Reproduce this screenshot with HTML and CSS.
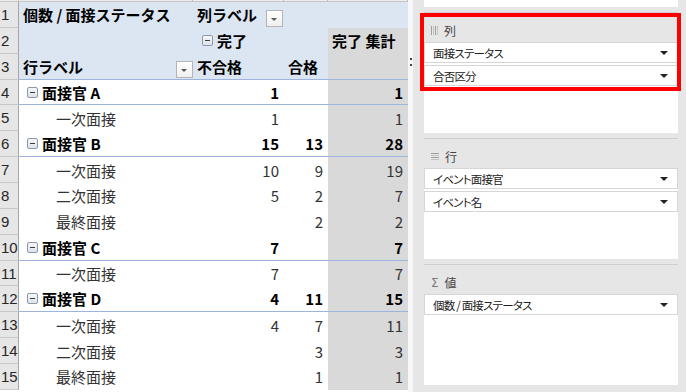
FILE: index.html
```html
<!DOCTYPE html>
<html lang="ja">
<head>
    <meta charset="UTF-8">
    <title>ピボットテーブル</title>
    <link rel="stylesheet" href="styles.css">
</head>
<body>
<div class="screen">
    <div class="sheet">
        <div class="row colhead"><div></div><div></div><div></div><div></div><div></div></div>

        <div class="row hd">
            <div class="cell rn">1</div>
            <div class="cell b">個数 / 面接ステータス</div>
            <div class="cell b has-btn">列ラベル<span class="filter"></span></div>
            <div class="cell"></div>
            <div class="cell"></div>
        </div>
        <div class="row hd">
            <div class="cell rn">2</div>
            <div class="cell"></div>
            <div class="cell b toggle-col"><span class="minus"></span>完了</div>
            <div class="cell"></div>
            <div class="cell b tot">完了 集計</div>
        </div>
        <div class="row hd line">
            <div class="cell rn">3</div>
            <div class="cell b has-btn edge">行ラベル<span class="filter"></span></div>
            <div class="cell b">不合格</div>
            <div class="cell b">合格</div>
            <div class="cell tot"></div>
        </div>

        <div class="row line">
            <div class="cell rn">4</div>
            <div class="cell b group"><span class="minus"></span>面接官 A</div>
            <div class="cell b num">1</div>
            <div class="cell num"></div>
            <div class="cell b num tot">1</div>
        </div>
        <div class="row">
            <div class="cell rn">5</div>
            <div class="cell sub">一次面接</div>
            <div class="cell num">1</div>
            <div class="cell num"></div>
            <div class="cell num tot">1</div>
        </div>
        <div class="row line">
            <div class="cell rn">6</div>
            <div class="cell b group"><span class="minus"></span>面接官 B</div>
            <div class="cell b num">15</div>
            <div class="cell b num">13</div>
            <div class="cell b num tot">28</div>
        </div>
        <div class="row">
            <div class="cell rn">7</div>
            <div class="cell sub">一次面接</div>
            <div class="cell num">10</div>
            <div class="cell num">9</div>
            <div class="cell num tot">19</div>
        </div>
        <div class="row">
            <div class="cell rn">8</div>
            <div class="cell sub">二次面接</div>
            <div class="cell num">5</div>
            <div class="cell num">2</div>
            <div class="cell num tot">7</div>
        </div>
        <div class="row">
            <div class="cell rn">9</div>
            <div class="cell sub">最終面接</div>
            <div class="cell num"></div>
            <div class="cell num">2</div>
            <div class="cell num tot">2</div>
        </div>
        <div class="row line">
            <div class="cell rn">10</div>
            <div class="cell b group"><span class="minus"></span>面接官 C</div>
            <div class="cell b num">7</div>
            <div class="cell num"></div>
            <div class="cell b num tot">7</div>
        </div>
        <div class="row">
            <div class="cell rn">11</div>
            <div class="cell sub">一次面接</div>
            <div class="cell num">7</div>
            <div class="cell num"></div>
            <div class="cell num tot">7</div>
        </div>
        <div class="row line">
            <div class="cell rn">12</div>
            <div class="cell b group"><span class="minus"></span>面接官 D</div>
            <div class="cell b num">4</div>
            <div class="cell b num">11</div>
            <div class="cell b num tot">15</div>
        </div>
        <div class="row">
            <div class="cell rn">13</div>
            <div class="cell sub">一次面接</div>
            <div class="cell num">4</div>
            <div class="cell num">7</div>
            <div class="cell num tot">11</div>
        </div>
        <div class="row">
            <div class="cell rn">14</div>
            <div class="cell sub">二次面接</div>
            <div class="cell num"></div>
            <div class="cell num">3</div>
            <div class="cell num tot">3</div>
        </div>
        <div class="row">
            <div class="cell rn">15</div>
            <div class="cell sub">最終面接</div>
            <div class="cell num"></div>
            <div class="cell num">1</div>
            <div class="cell num tot">1</div>
        </div>
    </div>

    <div class="split"><span class="grip"></span></div>

    <div class="panel">
        <div class="list top-list"></div>

        <div class="area">
            <div class="area-head">
                <svg class="ico" width="7" height="9" viewBox="0 0 7 9">
                    <rect x="0" y="0" width="1" height="9" fill="#a0a0a0"/>
                    <rect x="2" y="0" width="1" height="9" fill="#c4c4c4"/>
                    <rect x="4" y="0" width="1" height="9" fill="#a0a0a0"/>
                    <rect x="6" y="0" width="1" height="9" fill="#c4c4c4"/>
                </svg>
                <span>列</span>
            </div>
            <div class="list">
                <div class="item">面接ステータス<span class="arrow"></span></div>
                <div class="item">合否区分<span class="arrow"></span></div>
            </div>
        </div>

        <div class="area">
            <div class="area-head">
                <svg class="ico" width="8" height="7" viewBox="0 0 8 7">
                    <rect x="0" y="0" width="8" height="1" fill="#a0a0a0"/>
                    <rect x="0" y="2" width="8" height="1" fill="#c4c4c4"/>
                    <rect x="0" y="4" width="8" height="1" fill="#a0a0a0"/>
                    <rect x="0" y="6" width="8" height="1" fill="#c4c4c4"/>
                </svg>
                <span>行</span>
            </div>
            <div class="list">
                <div class="item">イベント面接官<span class="arrow"></span></div>
                <div class="item">イベント名<span class="arrow"></span></div>
            </div>
        </div>

        <div class="area">
            <div class="area-head">
                <span class="sigma">Σ</span>
                <span>値</span>
            </div>
            <div class="list">
                <div class="item">個数 / 面接ステータス<span class="arrow"></span></div>
            </div>
        </div>

        <div class="mark"></div>
    </div>
</div>
</body>
</html>
```

FILE: styles.css
```css
* {
    box-sizing: border-box;
}

body {
    margin: 0;
    background: #fff;
    font-family: "Noto Sans CJK JP", sans-serif;
}

.screen {
    display: flex;
    width: 686px;
    height: 392px;
    overflow: hidden;
}

/* spreadsheet */

.sheet {
    width: 408px;
    flex: none;
}

.row {
    display: grid;
    grid-template-columns: 19px 174px 91px 44px 80px;
    height: 25.86px;
}

.colhead {
    height: 2px;
}

.colhead div {
    background: #ececec;
    border-right: 1px solid #bdbdbd;
    border-bottom: 1px solid #c6c6c6;
}

.cell {
    display: flex;
    align-items: center;
    padding: 0 4px;
    font-size: 15px;
    color: #333;
    white-space: nowrap;
    overflow: hidden;
}

.hd .cell {
    background: #dce6f2;
}

.cell.tot {
    background: #d9d9d9;
}

.cell.rn {
    background: #e6e6e6;
    border-right: 1px solid #a6a6a6;
    border-bottom: 1px solid #c8c8c8;
    font-family: "Liberation Sans", sans-serif;
    font-size: 15px;
    color: #262626;
    padding: 0 0 0 1px;
}

.line .cell:not(.rn) {
    border-bottom: 1px solid #9db5dc;
}

.b {
    font-weight: bold;
    color: #000;
}

.num {
    justify-content: flex-end;
    padding-right: 5px;
}

.sub {
    padding-left: 37px;
}

.group {
    padding-left: 8px;
}

.toggle-col {
    padding-left: 9px;
}

.minus {
    width: 11px;
    height: 11px;
    margin-right: 4px;
    border: 1px solid #8d99aa;
    border-radius: 2px;
    background: linear-gradient(#f4f6f9, #dde3ec);
    position: relative;
    flex: none;
}

.minus::after {
    content: "";
    position: absolute;
    left: 2px;
    top: 4px;
    width: 5px;
    height: 1px;
    background: #3c3c3c;
}

.has-btn {
    justify-content: space-between;
    padding-right: 1px;
}

.has-btn.edge {
    padding-right: 0;
}

.filter {
    align-self: flex-end;
    width: 17px;
    height: 17px;
    margin-bottom: 1px;
    border: 1px solid #b4b4b4;
    background: linear-gradient(#ffffff, #f0f0f0);
    position: relative;
    flex: none;
}

.filter::after {
    content: "";
    position: absolute;
    left: 4px;
    top: 7px;
    border-left: 3px solid transparent;
    border-right: 3px solid transparent;
    border-top: 3px solid #595959;
}

/* splitter */

.split {
    width: 5px;
    flex: none;
    background: #f7f7f7;
}

.grip {
    display: block;
    width: 2px;
    height: 2px;
    margin: 58px 0 0 2px;
    background: #444;
    box-shadow: 0 6px #444;
}

/* field list */

.panel {
    flex: 1;
    background: #e6e6e6;
    padding: 0 8px 0 11px;
    position: relative;
}

.list {
    background: #fff;
    height: 91px;
}

.top-list {
    height: 7px;
}

.area {
    margin-top: 5px;
    border-top: 1px solid #cfcfcf;
}

.area-head {
    display: flex;
    align-items: center;
    gap: 6px;
    height: 29px;
    padding: 6px 0 0 7px;
    font-size: 12px;
    color: #444;
}

.sigma {
    font-family: "DejaVu Sans", sans-serif;
    font-size: 12px;
    color: #7a7a7a;
}

.item {
    display: flex;
    align-items: center;
    justify-content: space-between;
    height: 21px;
    margin-bottom: 2px;
    padding: 0 9px 0 8px;
    border: 1px solid #d6d6d6;
    font-size: 11.5px;
    letter-spacing: -0.8px;
    font-feature-settings: "palt";
    color: #222;
}

.arrow {
    border-left: 4px solid transparent;
    border-right: 4px solid transparent;
    border-top: 4px solid #222;
}

/* highlight frame drawn over the column area */
.mark {
    position: absolute;
    left: 7px;
    top: 13px;
    width: 261px;
    height: 78px;
    border: 4px solid #ff0000;
}
```
